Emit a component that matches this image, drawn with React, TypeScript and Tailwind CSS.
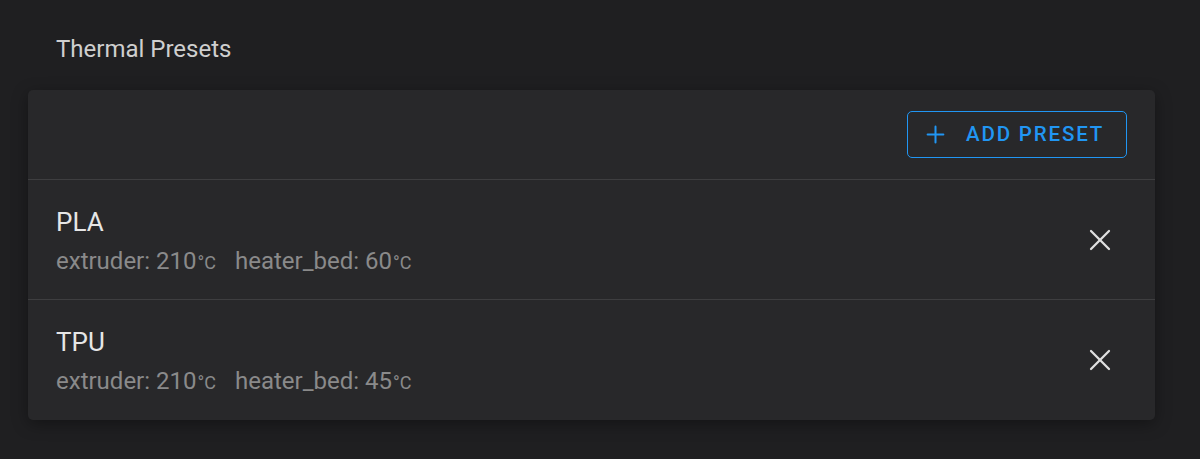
import { Plus, X } from "lucide-react";

const presets = [
  { id: 1, name: "PLA", extruder: 210, bed: 60 },
  { id: 2, name: "TPU", extruder: 210, bed: 45 },
];

const App = () => {
  return (
    <div className="min-h-screen bg-[#1f1f21] px-[28px] pt-[33px] font-['Roboto',sans-serif]">
      <h2 className="pl-[28px] text-[24px] leading-[32px] text-[#cfcfcf]">Thermal Presets</h2>

      <div className="mt-[25px] w-[1127px] rounded-[5px] bg-[#28282a] shadow-[0_4px_16px_rgba(0,0,0,0.35)]">
        <div className="flex h-[90px] items-center justify-end border-b border-[#3e3e40] pr-[28px]">
          <button className="flex h-[47px] w-[220px] items-center gap-[17px] rounded-[5px] border border-[#2196f3] pl-[14px] text-[20.5px] font-medium tracking-[0.09em] text-[#2196f3]">
            <Plus className="h-[27px] w-[27px]" strokeWidth={1.8} />
            ADD PRESET
          </button>
        </div>

        {presets.map((preset, i) => (
          <div
            key={preset.id}
            className={`flex h-[120px] items-center justify-between pl-[28px] pr-[37px] ${
              i < presets.length - 1 ? "border-b border-[#3e3e40]" : ""
            }`}
          >
            <div className="pt-[4px]">
              <div className="text-[26px] leading-[32px] text-[#e6e6e6]">{preset.name}</div>
              <div className="mt-[8px] text-[24px] leading-[30px] text-[#8a8a8a]">
                extruder: {preset.extruder}
                <span className="ml-[1px] text-[18px]">°C</span>
                <span className="ml-[19px]">heater_bed: {preset.bed}</span>
                <span className="ml-[1px] text-[18px]">°C</span>
              </div>
            </div>
            <X className="h-[36px] w-[36px] text-[#e0e0e0]" strokeWidth={1.5} />
          </div>
        ))}
      </div>
    </div>
  );
};

export default App;
